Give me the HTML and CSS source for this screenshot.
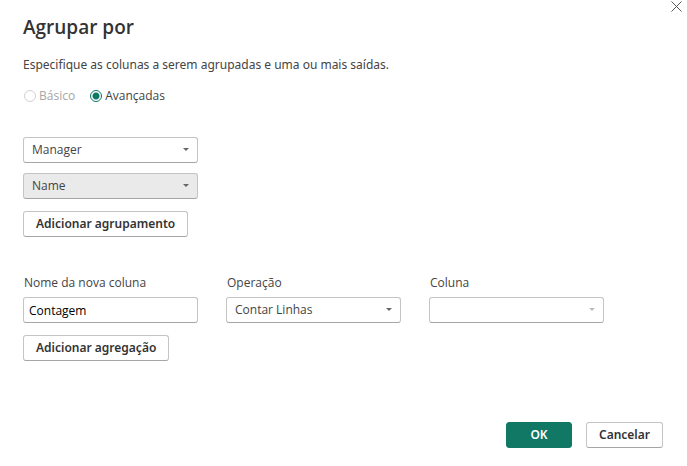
FILE: index.html
```html
<!DOCTYPE html>
<html lang="pt-BR">
<head>
<meta charset="utf-8">
<meta name="viewport" content="width=device-width, initial-scale=1">
<title>Agrupar por</title>
<link rel="stylesheet" href="styles.css">
</head>
<body>
<form class="dialog">
  <button class="close" type="button" aria-label="Fechar">
    <svg viewBox="0 0 11 11" width="11" height="11" aria-hidden="true"><path d="M.5 .5 10.5 10.5M10.5 .5 .5 10.5"/></svg>
  </button>
  <h1 class="title">Agrupar por</h1>
  <p class="description">Especifique as colunas a serem agrupadas e uma ou mais saídas.</p>
  <div class="modes">
    <label class="mode mode-disabled"><input class="radio" type="radio" name="mode" disabled>Básico</label>
    <label class="mode"><input class="radio" type="radio" name="mode" checked>Avançadas</label>
  </div>
  <div class="groups">
    <div class="picker">
      <select class="control" aria-label="Agrupamento 1"><option>Manager</option></select>
      <svg class="arrow" viewBox="0 0 6 3" width="6" height="3" aria-hidden="true"><path d="M0 0H6L3 3Z"/></svg>
    </div>
    <div class="picker">
      <select class="control control-active" aria-label="Agrupamento 2"><option>Name</option></select>
      <svg class="arrow" viewBox="0 0 6 3" width="6" height="3" aria-hidden="true"><path d="M0 0H6L3 3Z"/></svg>
    </div>
  </div>
  <button class="button" type="button">Adicionar agrupamento</button>
  <div class="aggregation">
    <div class="field">
      <label class="label" for="new-name">Nome da nova coluna</label>
      <input class="control control-text" id="new-name" type="text" value="Contagem">
    </div>
    <div class="field">
      <label class="label" for="operation">Operação</label>
      <div class="picker">
        <select class="control" id="operation"><option>Contar Linhas</option></select>
        <svg class="arrow" viewBox="0 0 6 3" width="6" height="3" aria-hidden="true"><path d="M0 0H6L3 3Z"/></svg>
      </div>
    </div>
    <div class="field">
      <label class="label" for="column">Coluna</label>
      <div class="picker">
        <select class="control" id="column" disabled><option></option></select>
        <svg class="arrow arrow-disabled" viewBox="0 0 6 3" width="6" height="3" aria-hidden="true"><path d="M0 0H6L3 3Z"/></svg>
      </div>
    </div>
  </div>
  <button class="button" type="button">Adicionar agregação</button>
  <div class="footer">
    <button class="button button-primary" type="submit">OK</button>
    <button class="button" type="button">Cancelar</button>
  </div>
</form>
</body>
</html>
```
FILE: styles.css
```css
* {
  box-sizing: border-box;
}

body {
  margin: 0;
  background: #fff;
  color: #444;
  font: 12px/16px "Open Sans", "Noto Sans", sans-serif;
}

.dialog {
  position: relative;
  display: flex;
  flex-direction: column;
  align-items: flex-start;
  min-height: 100vh;
  padding: 14px 24px 18px 23px;
}

.close {
  position: absolute;
  top: 1px;
  right: 5px;
  display: flex;
  padding: 0;
  border: 0;
  background: none;
}

.close path {
  fill: none;
  stroke: #555;
}

.title {
  margin: 0;
  color: #333;
  font-size: 19px;
  font-weight: 600;
  line-height: 26px;
}

.description {
  margin: 17px 0 0;
  font-family: "Noto Sans", "Open Sans", sans-serif;
}

.modes {
  display: flex;
  gap: 14px;
  margin-top: 15px;
}

.mode {
  display: flex;
  align-items: center;
  gap: 3px;
}

.mode-disabled {
  color: #a6a6a6;
}

.radio {
  appearance: none;
  width: 12px;
  height: 12px;
  margin: 0 0 0 1px;
  border: 1px solid #117865;
  border-radius: 50%;
}

.radio:checked {
  background: radial-gradient(circle, #117865 3px, #fff 4px);
}

.radio:disabled {
  border-color: #d0d0d0;
}

.groups {
  display: grid;
  gap: 10px;
  width: 27.35%;
  min-width: 175px;
  margin: 33px 0 12px;
}

.picker {
  position: relative;
}

.control {
  display: block;
  appearance: none;
  width: 100%;
  height: 26px;
  padding: 0 20px 1px 8px;
  border: 1px solid #c4c4c4;
  border-bottom-color: #a6a6a6;
  border-radius: 3px;
  background: #fff;
  color: #444;
  font: inherit;
  opacity: 1;
}

.control-active {
  background: #eaeaea;
}

.control-text {
  padding: 1px 5px 0;
  color: #000;
}

.arrow {
  position: absolute;
  top: 11px;
  right: 9px;
  fill: #666;
  pointer-events: none;
}

.arrow-disabled {
  fill: #bbb;
}

.button {
  height: 26px;
  padding: 0 12px 1px;
  border: 1px solid #c4c4c4;
  border-bottom-color: #a6a6a6;
  border-radius: 3px;
  background: #fff;
  color: #333;
  font: 600 12px/16px "Noto Sans", "Open Sans", sans-serif;
}

.aggregation {
  display: grid;
  grid-template-columns: repeat(3, minmax(0, 175px));
  gap: 28px;
  margin: 38px 0 12px;
}

.field {
  display: grid;
  gap: 6px;
}

.label {
  padding-left: 1px;
}

.footer {
  display: flex;
  gap: 14px;
  margin-top: auto;
  align-self: flex-end;
}

.button-primary {
  min-width: 66px;
  border-color: #117865;
  background: #117865;
  color: #fff;
}
```
